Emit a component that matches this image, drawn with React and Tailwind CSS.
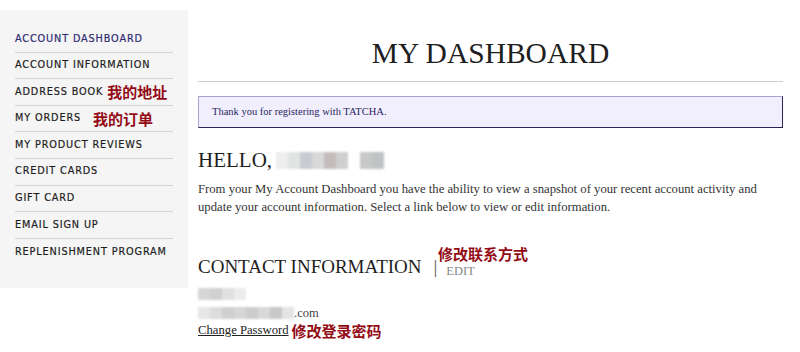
import React from "react";

const navItems = [
  { label: "ACCOUNT DASHBOARD", active: true },
  { label: "ACCOUNT INFORMATION" },
  { label: "ADDRESS BOOK", note: "我的地址" },
  { label: "MY ORDERS", note: "我的订单", noteGap: "ml-[12px]" },
  { label: "MY PRODUCT REVIEWS" },
  { label: "CREDIT CARDS" },
  { label: "GIFT CARD" },
  { label: "EMAIL SIGN UP" },
  { label: "REPLENISHMENT PROGRAM" },
];

const serif = "font-['Liberation_Serif',serif]";
const cjk = "font-['Noto_Sans_CJK_SC',sans-serif] font-bold text-[#930b15]";

// 모자이크 처리된 개인정보 블록
function Blur({ cells, className = "" }) {
  return (
    <div className={`flex blur-[1px] ${className}`}>
      {cells.map((c, i) => (
        <div key={i} className="h-full w-[12px]" style={{ background: c }} />
      ))}
    </div>
  );
}

export default function App() {
  return (
    <div className="flex h-[352px] w-[800px] overflow-hidden bg-white">
      {/* 사이드바 */}
      <aside className="mt-[10px] h-[278px] w-[188px] shrink-0 bg-[#f5f5f5] px-[15px] pt-[16px]">
        <ul>
          {navItems.map((item, i) => (
            <li
              key={item.label}
              className={`flex h-[26.6px] items-center whitespace-nowrap ${
                i < navItems.length - 1 ? "border-b border-[#d4d4d4]" : ""
              }`}
            >
              <span
                className={`font-['DejaVu_Sans',sans-serif] text-[9.7px] tracking-[0.09em] [-webkit-text-stroke:0.2px_currentColor] ${
                  item.active ? "text-[#2e2a70]" : "text-[#1c1c1c]"
                }`}
              >
                {item.label}
              </span>
              {item.note && (
                <span className={`${cjk} ${item.noteGap || "ml-[4px]"} text-[15px] leading-none`}>
                  {item.note}
                </span>
              )}
            </li>
          ))}
        </ul>
      </aside>

      {/* 본문 */}
      <main className={`ml-[10px] w-[585px] ${serif} text-[#222]`}>
        <h1 className="mt-[34px] border-b border-[#cfcfcf] pb-[9px] text-center text-[29.5px] leading-[38px] text-[#1e1e1e]">
          MY DASHBOARD
        </h1>

        <div className="mt-[14px] flex h-[32px] items-center border border-[#a7a2d2] border-b-[#29245a] border-r-[#29245a] bg-[#f1eefd] pl-[13px] text-[10.5px] text-[#2a2660]">
          Thank you for registering with TATCHA.
        </div>

        <div className="mt-[19px] flex items-center">
          <h2 className="text-[21px] leading-[26px] text-[#1e1e1e]">HELLO,</h2>
          <Blur
            className="ml-[4px] h-[17px]"
            cells={["#eee", "#e2e4e4", "#c8ccd0", "#d8d8d8", "#c4bcbc", "#cfcfcf", "#fff", "#c8c8c8", "#bfc3c3"]}
          />
        </div>

        <p className="mt-[7px] text-[12.7px] leading-[18px] text-[#333]">
          From your My Account Dashboard you have the ability to view a snapshot of your recent account activity and
          update your account information. Select a link below to view or edit information.
        </p>

        <div className="relative mt-[39px] flex items-end">
          <h2 className="text-[19px] leading-[24px] text-[#1e1e1e]">CONTACT INFORMATION</h2>
          <span className="ml-[12px] text-[19px] leading-[24px] text-[#555]">|</span>
          <span className="ml-[9px] pb-[2px] text-[12.5px] leading-none text-[#888]">EDIT</span>
          <span className={`${cjk} absolute left-[240px] top-[-9px] text-[15px] leading-none`}>
            修改联系方式
          </span>
        </div>

        <div className="mt-[9px]">
          <Blur className="h-[12px]" cells={["#d6d6d6", "#d0d0d0", "#e0e0e0", "#ececec"]} />
          <div className="mt-[6px] flex items-center">
            <Blur
              className="h-[12px]"
              cells={["#e6e6e6", "#dcdcdc", "#cfcfcf", "#d6d6d6", "#cccccc", "#d8d8d8", "#c8c8c8", "#e4e4e4"]}
            />
            <span className="text-[12.5px] leading-[14px] text-[#444]">.com</span>
          </div>
          <div className="mt-[2px] flex items-center">
            <a className="text-[12.7px] leading-[16px] text-[#222] underline">Change Password</a>
            <span className={`${cjk} ml-[3px] text-[15px] leading-none`}>修改登录密码</span>
          </div>
        </div>
      </main>
    </div>
  );
}
